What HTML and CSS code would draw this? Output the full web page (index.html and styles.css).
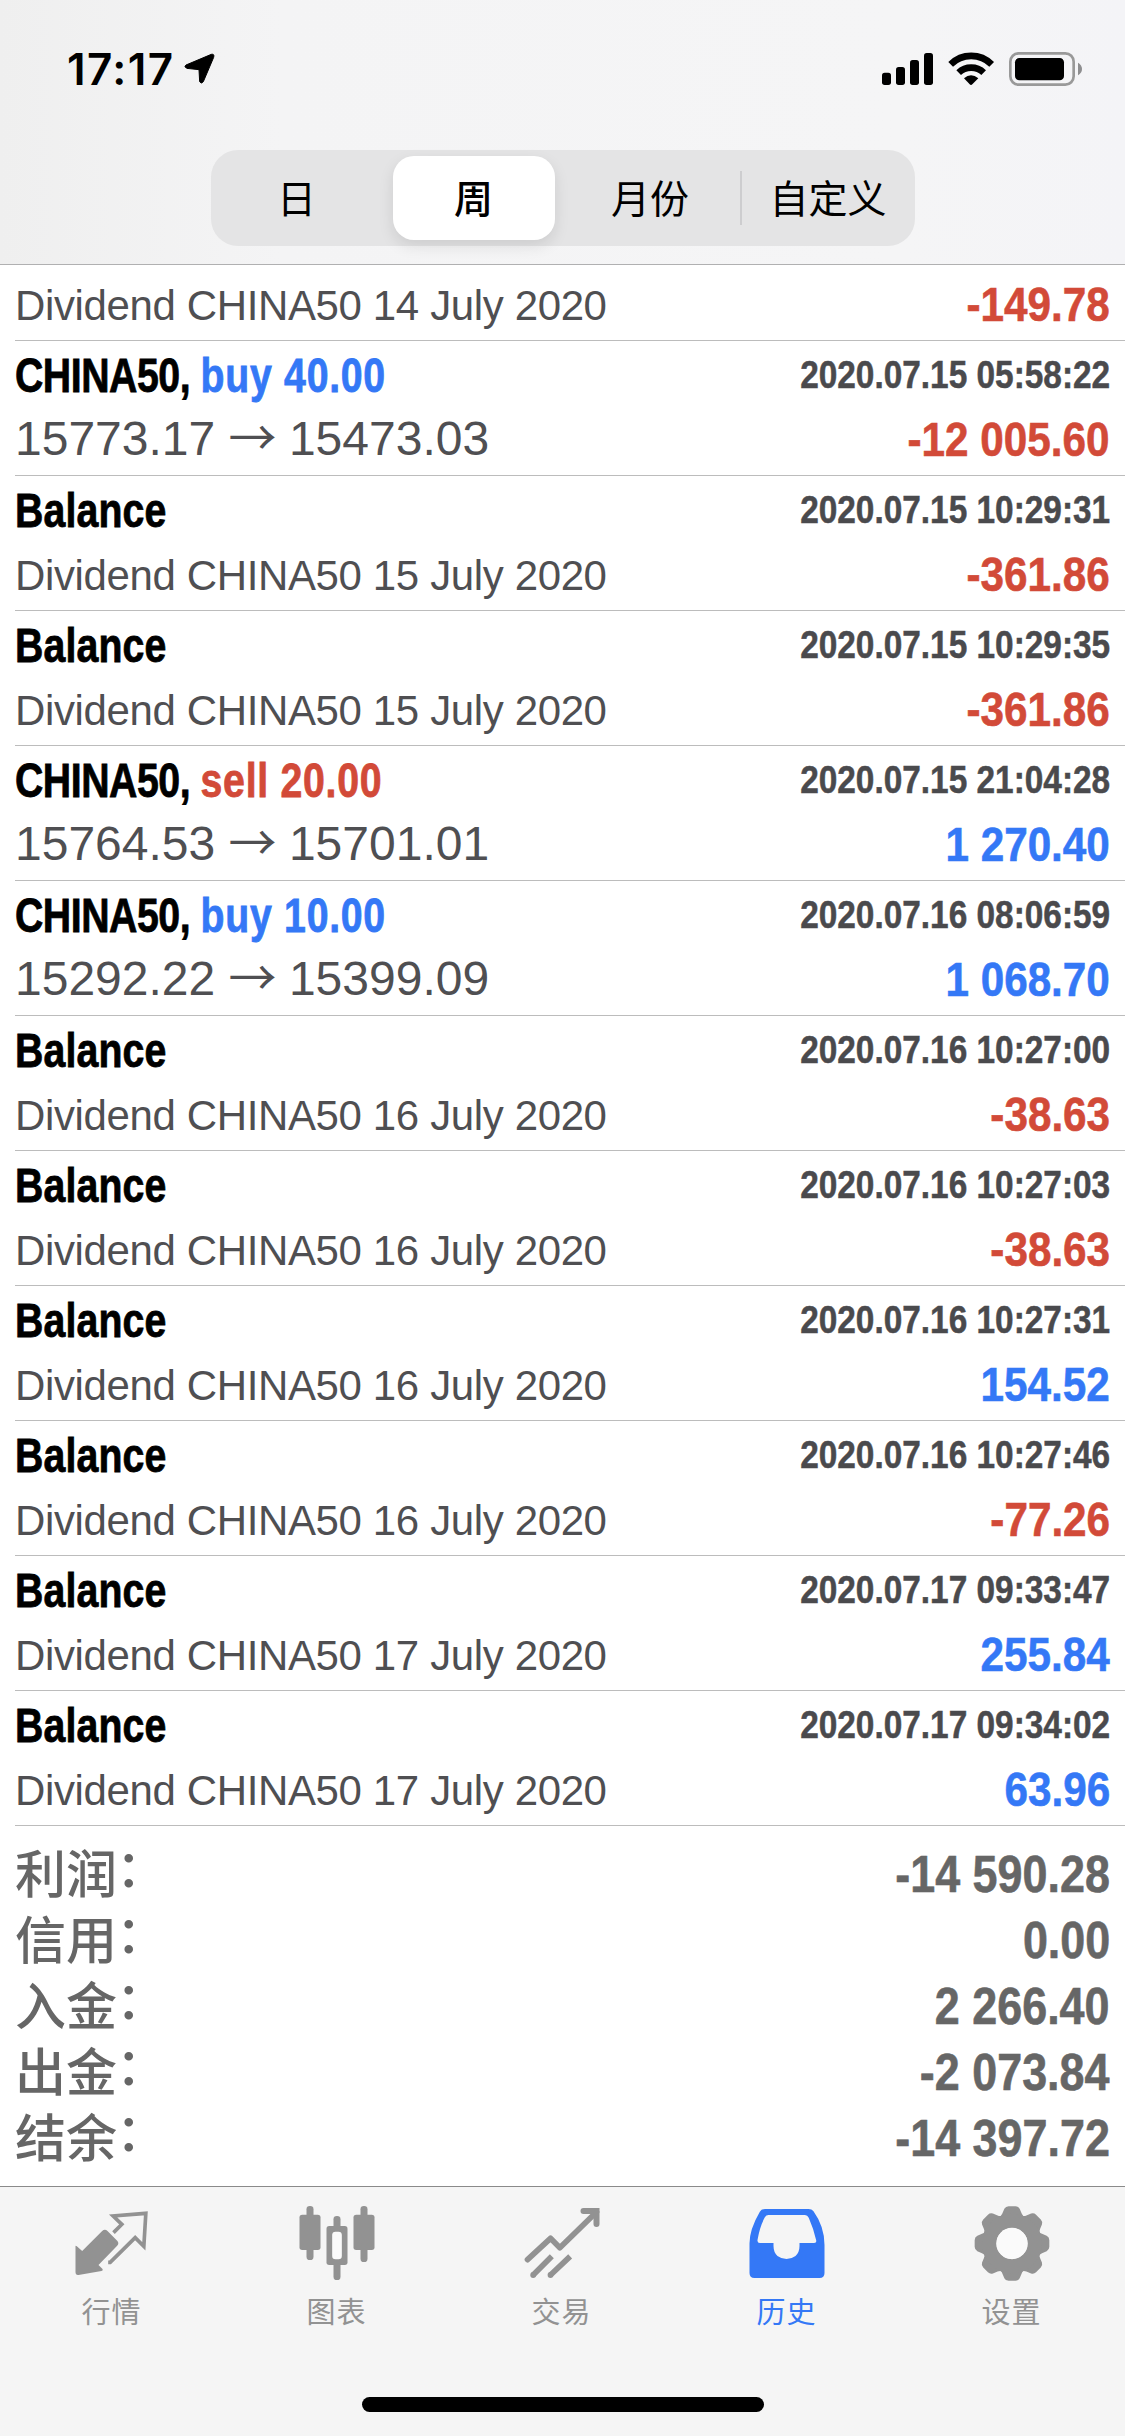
FILE: index.html
```html
<!DOCTYPE html>
<html lang="zh-CN">
<head>
<meta charset="utf-8">
<title>历史</title>
<link rel="stylesheet" href="styles.css">
</head>
<body>
<div class="screen">
  <header class="header">
    <div class="status">
      <div class="status-left">
        <span class="clock">17:17</span>
        <svg class="location" viewBox="432 69 93 93"><path d="M438 105 L514 73 Q524 71 521 82 L490 155 Q484 163 479 155 L477 119 L440 115 Q431 110 438 105Z"/></svg>
      </div>
      <svg class="indicators" viewBox="60 60 612 114">
        <rect x="66" y="128" width="27" height="37" rx="8"/><rect x="108" y="111" width="27" height="54" rx="8"/><rect x="150" y="90" width="27" height="75" rx="8"/><rect x="192" y="69" width="27" height="96" rx="8"/>
        <g fill="none" stroke="#000" stroke-width="20"><path d="M272 103 A87 87 0 0 1 395 103"/><path d="M296 128 A54 54 0 0 1 371 128"/></g>
        <path d="M312 145 Q333 126 355 145 L337 163 Q333 167 329 163Z"/>
        <rect x="451" y="70" width="190" height="94" rx="25" fill="none" stroke="#999" stroke-width="8"/>
        <rect x="465" y="84" width="147" height="67" rx="13"/>
        <path d="M654 98 Q666 105 666 117 Q666 129 654 136Z" fill="#8e8e90"/>
      </svg>
    </div>
    <nav class="segments">
      <span class="segment">日</span>
      <span class="segment selected">周</span>
      <span class="segment">月份</span>
      <span class="segment divided">自定义</span>
    </nav>
  </header>

  <main class="history">
    <div class="deal partial"><div class="line"><span class="note">Dividend CHINA50 14 July 2020</span><span class="amount loss">-149.78</span></div></div>
    <div class="deal"><div class="line head"><span class="symbol trade">CHINA50, <span class="side gain">buy 40.00</span></span><span class="time">2020.07.15 05:58:22</span></div><div class="line"><span class="prices">15773.17 <span class="arrow">→</span> 15473.03</span><span class="amount loss">-12 005.60</span></div></div>
    <div class="deal"><div class="line head"><span class="symbol">Balance</span><span class="time">2020.07.15 10:29:31</span></div><div class="line"><span class="note">Dividend CHINA50 15 July 2020</span><span class="amount loss">-361.86</span></div></div>
    <div class="deal"><div class="line head"><span class="symbol">Balance</span><span class="time">2020.07.15 10:29:35</span></div><div class="line"><span class="note">Dividend CHINA50 15 July 2020</span><span class="amount loss">-361.86</span></div></div>
    <div class="deal"><div class="line head"><span class="symbol trade">CHINA50, <span class="side loss">sell 20.00</span></span><span class="time">2020.07.15 21:04:28</span></div><div class="line"><span class="prices">15764.53 <span class="arrow">→</span> 15701.01</span><span class="amount gain">1 270.40</span></div></div>
    <div class="deal"><div class="line head"><span class="symbol trade">CHINA50, <span class="side gain">buy 10.00</span></span><span class="time">2020.07.16 08:06:59</span></div><div class="line"><span class="prices">15292.22 <span class="arrow">→</span> 15399.09</span><span class="amount gain">1 068.70</span></div></div>
    <div class="deal"><div class="line head"><span class="symbol">Balance</span><span class="time">2020.07.16 10:27:00</span></div><div class="line"><span class="note">Dividend CHINA50 16 July 2020</span><span class="amount loss">-38.63</span></div></div>
    <div class="deal"><div class="line head"><span class="symbol">Balance</span><span class="time">2020.07.16 10:27:03</span></div><div class="line"><span class="note">Dividend CHINA50 16 July 2020</span><span class="amount loss">-38.63</span></div></div>
    <div class="deal"><div class="line head"><span class="symbol">Balance</span><span class="time">2020.07.16 10:27:31</span></div><div class="line"><span class="note">Dividend CHINA50 16 July 2020</span><span class="amount gain">154.52</span></div></div>
    <div class="deal"><div class="line head"><span class="symbol">Balance</span><span class="time">2020.07.16 10:27:46</span></div><div class="line"><span class="note">Dividend CHINA50 16 July 2020</span><span class="amount loss">-77.26</span></div></div>
    <div class="deal"><div class="line head"><span class="symbol">Balance</span><span class="time">2020.07.17 09:33:47</span></div><div class="line"><span class="note">Dividend CHINA50 17 July 2020</span><span class="amount gain">255.84</span></div></div>
    <div class="deal"><div class="line head"><span class="symbol">Balance</span><span class="time">2020.07.17 09:34:02</span></div><div class="line"><span class="note">Dividend CHINA50 17 July 2020</span><span class="amount gain">63.96</span></div></div>

    <section class="summary">
      <div class="total"><span class="label">利润<span class="colon">：</span></span><span class="value">-14 590.28</span></div>
      <div class="total"><span class="label">信用<span class="colon">：</span></span><span class="value">0.00</span></div>
      <div class="total"><span class="label">入金<span class="colon">：</span></span><span class="value">2 266.40</span></div>
      <div class="total"><span class="label">出金<span class="colon">：</span></span><span class="value">-2 073.84</span></div>
      <div class="total"><span class="label">结余<span class="colon">：</span></span><span class="value">-14 397.72</span></div>
    </section>
  </main>

  <footer class="footer">
    <nav class="tabs">
      <div class="tab">
        <svg class="icon" viewBox="97.5 75 240 231"><path d="M105 199 Q105 195 109 199 L125 213 L185 153 Q193 146 201 153 L230 182 Q237 189 230 197 L174 255 L186 267 Q189 271 183 273 L114 285 Q105 286 105 276Z"/><path d="M219 158 L244 133 L218 108 L316 100 L310 199 L284 173 L209 247 H203" fill="none" stroke="currentColor" stroke-width="11"/></svg>
        <span>行情</span>
      </div>
      <div class="tab">
        <svg class="icon" viewBox="772.5 75 240 231"><rect x="798" y="78" width="21" height="162" rx="10"/><rect x="777" y="104" width="63" height="106" rx="8"/><rect x="960" y="78" width="21" height="168" rx="10"/><rect x="939" y="104" width="63" height="106" rx="8"/><rect x="879" y="108" width="21" height="192" rx="10"/><rect x="858" y="138" width="63" height="117" rx="8"/><rect x="875" y="155" width="29" height="83" rx="10" fill="#fafafa"/></svg>
        <span>图表</span>
      </div>
      <div class="tab">
        <svg class="icon" viewBox="127.5 75 240 231"><g fill="none" stroke="currentColor" stroke-width="17"><path d="M141 239 L210 175 L238 203 L348 96" stroke-linejoin="round" stroke-linecap="round"/><path d="M309 93 H348 V132" stroke-width="18" stroke-linecap="round"/><path d="M158 285 L214 229M210 285 L269 229"/></g><circle cx="158" cy="285" r="8.7"/><circle cx="210" cy="285" r="8.7"/></svg>
        <span>交易</span>
      </div>
      <div class="tab active">
        <svg class="icon" viewBox="802.5 75 240 231"><path fill-rule="evenodd" d="M854 87 H984 Q994 87 999 94 Q1032 140 1032 195 V279 Q1032 294 1017 294 H822 Q807 294 807 279 V190 Q807 148 838 95 Q843 87 854 87Z M864 105 Q857 105 853 112 Q838 139 831 180 Q830 189 838 189 H879 V198 Q879 217 891 228 Q903 237 918 237 Q933 237 945 228 Q957 217 957 198 V189 H1001 Q1009 189 1007 181 Q1000 148 985 114 Q981 105 972 105Z"/></svg>
        <span>历史</span>
      </div>
      <div class="tab">
        <svg class="icon" viewBox="217.5 75 240 231"><g transform="translate(334.5 190.5)"><path id="tooth" d="M-40 -78 Q-31 -84 -29 -90 L-23 -104 Q-19 -112 -10 -112 H10 Q19 -112 23 -104 L29 -90 Q31 -84 40 -78Z"/><use href="#tooth" transform="rotate(45)"/><use href="#tooth" transform="rotate(90)"/><use href="#tooth" transform="rotate(135)"/><use href="#tooth" transform="rotate(180)"/><use href="#tooth" transform="rotate(225)"/><use href="#tooth" transform="rotate(270)"/><use href="#tooth" transform="rotate(315)"/><circle r="68" fill="none" stroke="currentColor" stroke-width="43"/><circle r="47" fill="#fafafa"/></g></svg>
        <span>设置</span>
      </div>
    </nav>
    <div class="home-bar"></div>
  </footer>
</div>
</body>
</html>
```
FILE: styles.css
```css
* { box-sizing: border-box; }

body {
  margin: 0;
  background: #fff;
  font-family: "Liberation Sans", "Noto Sans CJK SC", sans-serif;
}

.screen {
  display: flex;
  flex-direction: column;
  width: 1125px;
  height: 2436px;
  overflow: hidden;
  color: #000;
}

.header {
  display: flex;
  flex-direction: column;
  align-items: center;
  height: 265px;
  border-bottom: 1px solid #b0b0b1;
  background: linear-gradient(90deg, #efefef 0%, #f4f4f5 25%, #f5f5f6 80%, #f4f4f7 100%);
}

.status {
  display: flex;
  justify-content: space-between;
  width: 100%;
  height: 150px;
  padding: 50px 41px 0 67px;
}

.status-left { display: flex; gap: 11px; }

.clock {
  width: 106px;
  font: 600 44px/38px Inter, sans-serif;
  letter-spacing: 1.4px;
  white-space: nowrap;
}

.location {
  width: 31px;
  height: 31px;
  margin-top: 3px;
  overflow: visible;
  stroke: #000;
  stroke-width: 3;
}

.indicators { width: 204px; height: 38px; }

.segments {
  display: grid;
  grid-template-columns: 179px 168px 182px 175px;
  width: 704px;
  height: 96px;
  padding: 6px 0;
  border-radius: 27px;
  background: #e4e4e5;
}

.segment {
  display: flex;
  align-items: center;
  justify-content: center;
  padding-bottom: 5px;
  font: 400 39px/54px "Noto Sans CJK SC", sans-serif;
}

.segment:first-child { padding-right: 7px; }

.segment:nth-child(3) { padding-left: 3px; }

.selected {
  margin: 0 3px;
  border-radius: 21px;
  background: #fff;
  box-shadow: 0 6px 15px rgba(0, 0, 0, .1);
  font-weight: 500;
}

.divided {
  height: 54px;
  align-self: center;
  border-left: 2px solid #cdcdcf;
}

.deal {
  height: 135px;
  margin-left: 15px;
  padding-right: 15px;
  border-bottom: 1px solid #bcbcbc;
}

.partial { height: 76px; padding-top: 9px; }

.line {
  display: flex;
  justify-content: space-between;
  height: 60px;
  white-space: nowrap;
}

.head { height: 68px; }

.symbol {
  font-size: 48px;
  font-weight: 700;
  line-height: 70px;
  letter-spacing: .2px;
  transform: scaleX(.817);
  transform-origin: left;
  -webkit-text-stroke: .8px;
}

.trade { letter-spacing: -.55px; }

.side { letter-spacing: .9px; }

.time {
  color: #4a4a4d;
  font-size: 39px;
  font-weight: 700;
  line-height: 67px;
  transform: scaleX(.856);
  transform-origin: right;
  -webkit-text-stroke: .5px;
}

.note {
  color: #4f4f52;
  font-size: 42px;
  line-height: 63px;
  letter-spacing: -.37px;
}

.prices { color: #4f4f52; font-size: 48px; line-height: 60px; }

.arrow {
  font-family: "Noto Sans CJK SC", sans-serif;
  line-height: 0;
  letter-spacing: -1px;
}

.amount {
  font-size: 48px;
  font-weight: 700;
  line-height: 61px;
  transform: scaleX(.88);
  transform-origin: right;
  -webkit-text-stroke: .6px;
}

.gain { color: #3478f6; }
.loss { color: #d24a38; }

.summary { height: 360px; padding: 15px 15px 0; color: #666; }

.total {
  display: flex;
  justify-content: space-between;
  height: 66px;
  white-space: nowrap;
}

.label { font: 500 51px/60px "Noto Sans CJK SC", sans-serif; }

.colon { display: inline-block; transform: translate(-1px, -6px); }

.value {
  font-size: 51px;
  font-weight: 700;
  line-height: 68px;
  transform: scaleX(.88);
  transform-origin: right;
  -webkit-text-stroke: .6px;
}

.footer {
  flex: 1;
  display: flex;
  flex-direction: column;
  align-items: center;
  border-top: 1px solid #8a8a8a;
  background: #f5f5f5;
}

.tabs {
  display: grid;
  grid-template-columns: repeat(5, 225px);
  height: 210px;
  padding-top: 18px;
}

.tab {
  display: flex;
  flex-direction: column;
  align-items: center;
  color: #929292;
  fill: currentColor;
  font: 400 29px/44px "Noto Sans CJK SC", sans-serif;
  letter-spacing: 1px;
}

.tab span { margin-right: 2px; }

.icon { width: 80px; height: 77px; margin-bottom: 6px; }

.active { color: #3478f6; }

.home-bar {
  width: 402px;
  height: 15px;
  border-radius: 8px;
  background: #000;
}
```
